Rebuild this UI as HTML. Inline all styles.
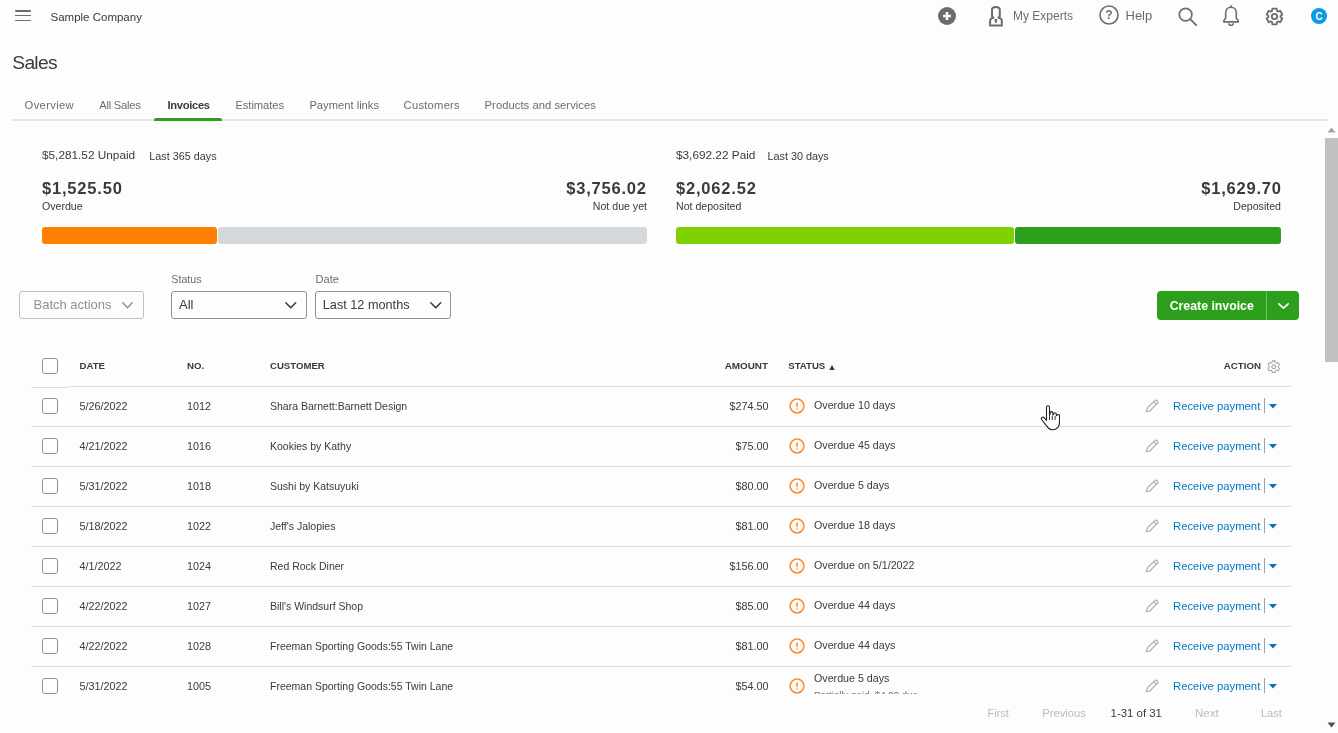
<!DOCTYPE html>
<html><head><meta charset="utf-8"><title>Sales - Invoices</title>
<style>
html,body{margin:0;padding:0;}
body{width:1338px;height:733px;overflow:hidden;position:relative;background:#fdfdfd;font-family:"Liberation Sans", sans-serif;}
.t{position:absolute;white-space:nowrap;}
</style></head><body><div id="root" style="position:absolute;left:0;top:0;width:1338px;height:733px;will-change:transform">
<div style="position:absolute;left:15px;top:10.1px;width:16px;height:1.9px;background:#6b6c72;border-radius:1px"></div>
<div style="position:absolute;left:15px;top:14.6px;width:16px;height:1.9px;background:#6b6c72;border-radius:1px"></div>
<div style="position:absolute;left:15px;top:19.6px;width:16px;height:1.9px;background:#6b6c72;border-radius:1px"></div>
<div class="t" style="left:50.5px;top:11.57px;font-size:11.5px;line-height:11.5px;color:#393a3d;font-weight:400;">Sample Company</div>
<svg style="position:absolute;left:938px;top:7px" width="18" height="18" viewBox="0 0 18 18"><circle cx="9" cy="9" r="9" fill="#6b6c72"/><path d="M9 5.1v7.8M5.1 9h7.8" stroke="#fff" stroke-width="2.5"/></svg>
<svg style="position:absolute;left:988px;top:5px" width="17" height="22" viewBox="0 0 17 22"><path d="M4 12.2V4.6C4 2.6 5.4 1.9 7.9 1.9C10.4 1.9 11.8 2.6 11.8 4.6V12.2" fill="none" stroke="#6b6c72" stroke-width="2"/><path d="M2.1 20.6V15.6C2.1 14.4 3 13.6 4.4 13L6.3 12.3M13.8 20.6V15.6C13.8 14.4 12.9 13.6 11.5 13L9.6 12.3M1.1 20.6H14.8" fill="none" stroke="#6b6c72" stroke-width="2"/><path d="M6.6 14.1h2.6l-.2 3.2-1.1 1-1.1-1z" fill="#6b6c72"/></svg>
<div class="t" style="left:1013px;top:9.54px;font-size:12px;line-height:12px;color:#6b6c72;font-weight:400;">My Experts</div>
<svg style="position:absolute;left:1099px;top:5px" width="20" height="20" viewBox="0 0 20 20"><circle cx="10" cy="10" r="9" fill="none" stroke="#6b6c72" stroke-width="1.6"/><text x="10" y="14.3" text-anchor="middle" font-family="Liberation Sans" font-weight="700" font-size="12" fill="#6b6c72">?</text></svg>
<div class="t" style="left:1125.5px;top:8.70px;font-size:13px;line-height:13px;color:#6b6c72;font-weight:400;">Help</div>
<svg style="position:absolute;left:1178px;top:7px" width="20" height="19" viewBox="0 0 20 19"><circle cx="7.6" cy="7.6" r="6.3" fill="none" stroke="#6b6c72" stroke-width="1.7"/><path d="M12.2 12.2l6 6" stroke="#6b6c72" stroke-width="1.8" stroke-linecap="round"/></svg>
<svg style="position:absolute;left:1222px;top:5px" width="18" height="21" viewBox="0 0 18 21"><path d="M9 2.2c-3.2 0-5.3 2.4-5.3 5.6v5.2L1.8 15.6v1.3h14.4v-1.3l-1.9-2.6V7.8C14.3 4.6 12.2 2.2 9 2.2z" fill="none" stroke="#6b6c72" stroke-width="1.6" stroke-linejoin="round"/><path d="M9 .8v1.6" stroke="#6b6c72" stroke-width="1.6" stroke-linecap="round"/><path d="M6.8 18.3a2.2 2.2 0 0 0 4.4 0" fill="none" stroke="#6b6c72" stroke-width="1.6"/></svg>
<svg style="position:absolute;left:1265px;top:7.1px" width="19" height="19" viewBox="0 0 19 19"><path d="M7.01 3.93 L7.34 1.69 L11.66 1.69 L11.99 3.93 L13.08 4.56 L15.18 3.73 L17.34 7.47 L15.57 8.87 L15.57 10.13 L17.34 11.53 L15.18 15.27 L13.08 14.44 L11.99 15.07 L11.66 17.31 L7.34 17.31 L7.01 15.07 L5.92 14.44 L3.82 15.27 L1.66 11.53 L3.43 10.13 L3.43 8.87 L1.66 7.47 L3.82 3.73 L5.92 4.56Z" fill="none" stroke="#6b6c72" stroke-width="1.8" stroke-linejoin="round"/><circle cx="9.5" cy="9.5" r="2.7" fill="none" stroke="#6b6c72" stroke-width="1.8"/></svg>
<svg style="position:absolute;left:1311px;top:8px" width="16" height="16" viewBox="0 0 16 16"><circle cx="8" cy="8" r="8" fill="#0d9ae6"/><text x="8" y="11.6" text-anchor="middle" font-family="Liberation Sans" font-weight="700" font-size="10" fill="#fff">C</text></svg>
<div class="t" style="left:12.3px;top:52.95px;font-size:19.2px;line-height:19.2px;color:#393a3d;font-weight:400;letter-spacing:-0.7px;">Sales</div>
<div class="t" style="left:24.6px;top:99.72px;font-size:11.2px;line-height:11.2px;color:#6b6c72;font-weight:400;letter-spacing:0.34px;">Overview</div>
<div class="t" style="left:99.3px;top:99.72px;font-size:11.2px;line-height:11.2px;color:#6b6c72;font-weight:400;letter-spacing:-0.25px;">All Sales</div>
<div class="t" style="left:167.4px;top:99.72px;font-size:11.2px;line-height:11.2px;color:#393a3d;font-weight:700;letter-spacing:-0.3px;">Invoices</div>
<div class="t" style="left:235.4px;top:99.72px;font-size:11.2px;line-height:11.2px;color:#6b6c72;font-weight:400;letter-spacing:-0.05px;">Estimates</div>
<div class="t" style="left:309.4px;top:99.72px;font-size:11.2px;line-height:11.2px;color:#6b6c72;font-weight:400;">Payment links</div>
<div class="t" style="left:403.6px;top:99.72px;font-size:11.2px;line-height:11.2px;color:#6b6c72;font-weight:400;letter-spacing:0.25px;">Customers</div>
<div class="t" style="left:484.6px;top:99.72px;font-size:11.2px;line-height:11.2px;color:#6b6c72;font-weight:400;letter-spacing:0.06px;">Products and services</div>
<div style="position:absolute;left:12px;top:119px;width:1315px;height:2px;background:#e3e5e8"></div>
<div style="position:absolute;left:154px;top:118px;width:68px;height:3px;background:#2ca01c;border-radius:2px 2px 0 0"></div>
<div style="position:absolute;left:1325px;top:121px;width:13px;height:612px;background:#fdfdfd"></div>
<div style="position:absolute;left:1325px;top:138px;width:13px;height:224px;background:#c1c1c1"></div>
<svg style="position:absolute;left:1327px;top:127px" width="9" height="6" viewBox="0 0 9 6"><path d="M4.5 0.5L8.5 5.5H0.5z" fill="#a3a3a3"/></svg>
<svg style="position:absolute;left:1327px;top:722px" width="9" height="6" viewBox="0 0 9 6"><path d="M0.5 0.5H8.5L4.5 5.5z" fill="#505050"/></svg>
<div class="t" style="left:42px;top:150.01px;font-size:11.8px;line-height:11.8px;color:#393a3d;font-weight:400;">$5,281.52 Unpaid</div>
<div class="t" style="left:149.3px;top:150.86px;font-size:10.8px;line-height:10.8px;color:#393a3d;font-weight:400;">Last 365 days</div>
<div class="t" style="left:42px;top:179.73px;font-size:16.5px;line-height:16.5px;color:#393a3d;font-weight:700;letter-spacing:0.8px;">$1,525.50</div>
<div class="t" style="left:42px;top:201.03px;font-size:10.6px;line-height:10.6px;color:#393a3d;font-weight:400;">Overdue</div>
<div class="t" style="right:692px;top:179.73px;font-size:16.5px;line-height:16.5px;color:#393a3d;font-weight:700;letter-spacing:0.8px;margin-right:-0.8px">$3,756.02</div>
<div class="t" style="right:691px;top:201.03px;font-size:10.6px;line-height:10.6px;color:#393a3d;font-weight:400;">Not due yet</div>
<div style="position:absolute;left:42px;top:227px;width:175px;height:17px;background:#ff8000;border-radius:3px"></div>
<div style="position:absolute;left:218px;top:227px;width:429px;height:17px;background:#d4d7dc;border-radius:3px"></div>
<div class="t" style="left:676px;top:150.01px;font-size:11.8px;line-height:11.8px;color:#393a3d;font-weight:400;">$3,692.22 Paid</div>
<div class="t" style="left:767.5px;top:150.86px;font-size:10.8px;line-height:10.8px;color:#393a3d;font-weight:400;">Last 30 days</div>
<div class="t" style="left:676px;top:179.73px;font-size:16.5px;line-height:16.5px;color:#393a3d;font-weight:700;letter-spacing:0.8px;">$2,062.52</div>
<div class="t" style="left:676px;top:201.03px;font-size:10.6px;line-height:10.6px;color:#393a3d;font-weight:400;">Not deposited</div>
<div class="t" style="right:57px;top:179.73px;font-size:16.5px;line-height:16.5px;color:#393a3d;font-weight:700;letter-spacing:0.8px;margin-right:-0.8px">$1,629.70</div>
<div class="t" style="right:57px;top:201.03px;font-size:10.6px;line-height:10.6px;color:#393a3d;font-weight:400;">Deposited</div>
<div style="position:absolute;left:676px;top:227px;width:338px;height:17px;background:#7fd000;border-radius:3px"></div>
<div style="position:absolute;left:1015px;top:227px;width:266px;height:17px;background:#2ca01c;border-radius:3px"></div>
<div style="position:absolute;left:19px;top:291px;width:125px;height:28px;box-sizing:border-box;border:1px solid #babec5;border-radius:3px"></div>
<div class="t" style="left:33.5px;top:297.70px;font-size:13px;line-height:13px;color:#8d9096;font-weight:400;">Batch actions</div>
<svg style="position:absolute;left:122px;top:301.5px;overflow:visible" width="11" height="6.5" viewBox="0 0 11 6.5"><path d="M0.8 0.8L5.5 5.7L10.2 0.8" fill="none" stroke="#8d9096" stroke-width="1.5" stroke-linecap="round" stroke-linejoin="round"/></svg>
<div class="t" style="left:171.3px;top:273.94px;font-size:10.7px;line-height:10.7px;color:#6b6c72;font-weight:400;">Status</div>
<div style="position:absolute;left:171px;top:291px;width:136px;height:28px;box-sizing:border-box;border:1px solid #8d9096;border-radius:3px"></div>
<div class="t" style="left:179px;top:297.70px;font-size:13px;line-height:13px;color:#393a3d;font-weight:400;">All</div>
<svg style="position:absolute;left:285px;top:301.5px;overflow:visible" width="11.5" height="6.5" viewBox="0 0 11.5 6.5"><path d="M0.8 0.8L5.75 5.7L10.7 0.8" fill="none" stroke="#393a3d" stroke-width="1.5" stroke-linecap="round" stroke-linejoin="round"/></svg>
<div class="t" style="left:315.6px;top:273.69px;font-size:11px;line-height:11px;color:#6b6c72;font-weight:400;">Date</div>
<div style="position:absolute;left:315px;top:291px;width:136px;height:28px;box-sizing:border-box;border:1px solid #8d9096;border-radius:3px"></div>
<div class="t" style="left:322.8px;top:298.75px;font-size:12.7px;line-height:12.7px;color:#393a3d;font-weight:400;">Last 12 months</div>
<svg style="position:absolute;left:429.5px;top:301.5px;overflow:visible" width="11.5" height="6.5" viewBox="0 0 11.5 6.5"><path d="M0.8 0.8L5.75 5.7L10.7 0.8" fill="none" stroke="#393a3d" stroke-width="1.5" stroke-linecap="round" stroke-linejoin="round"/></svg>
<div style="position:absolute;left:1157px;top:291px;width:142px;height:29px;background:#2ca01c;border-radius:4px"></div>
<div style="position:absolute;left:1266px;top:291px;width:1px;height:29px;background:#6cc060"></div>
<div class="t" style="left:1169.7px;top:299.89px;font-size:12.3px;line-height:12.3px;color:#fff;font-weight:700;">Create invoice</div>
<svg style="position:absolute;left:1277.5px;top:303px;overflow:visible" width="11" height="6" viewBox="0 0 11 6"><path d="M0.8 0.8L5.5 5.2L10.2 0.8" fill="none" stroke="#fff" stroke-width="1.6" stroke-linecap="round" stroke-linejoin="round"/></svg>
<div style="position:absolute;left:42px;top:358px;width:16px;height:16px;box-sizing:border-box;border:1px solid #8d9096;border-radius:3px;background:#fff"></div>
<div class="t" style="left:79.5px;top:361.47px;font-size:9.6px;line-height:9.6px;color:#393a3d;font-weight:700;">DATE</div>
<div class="t" style="left:187px;top:361.47px;font-size:9.6px;line-height:9.6px;color:#393a3d;font-weight:700;">NO.</div>
<div class="t" style="left:270px;top:361.47px;font-size:9.6px;line-height:9.6px;color:#393a3d;font-weight:700;">CUSTOMER</div>
<div class="t" style="right:570px;top:361.22px;font-size:9.9px;line-height:9.9px;color:#393a3d;font-weight:700;">AMOUNT</div>
<div class="t" style="left:788.3px;top:361.47px;font-size:9.6px;line-height:9.6px;color:#393a3d;font-weight:700;">STATUS</div>
<svg style="position:absolute;left:828.5px;top:364.5px" width="6" height="5.5" viewBox="0 0 6 5.5"><path d="M3 0L6 5.5H0z" fill="#393a3d"/></svg>
<div class="t" style="right:77px;top:361.39px;font-size:9.7px;line-height:9.7px;color:#393a3d;font-weight:700;">ACTION</div>
<svg style="position:absolute;left:1267px;top:359.5px" width="13.5" height="13.5" viewBox="0 0 19 19"><path d="M7.13 3.56 L7.62 1.11 L11.38 1.11 L11.87 3.56 L13.46 4.47 L15.83 3.68 L17.71 6.93 L15.83 8.58 L15.83 10.42 L17.71 12.07 L15.83 15.32 L13.46 14.53 L11.87 15.44 L11.38 17.89 L7.62 17.89 L7.13 15.44 L5.54 14.53 L3.17 15.32 L1.29 12.07 L3.17 10.42 L3.17 8.58 L1.29 6.93 L3.17 3.68 L5.54 4.47Z" fill="none" stroke="#8d9096" stroke-width="1.4" stroke-linejoin="round"/><circle cx="9.5" cy="9.5" r="2.7" fill="none" stroke="#8d9096" stroke-width="1.4"/></svg>
<div style="position:absolute;left:31px;top:387px;width:38px;height:1px;background:#dcdee2"></div>
<div style="position:absolute;left:69px;top:386px;width:1222px;height:1px;background:#dcdee2"></div>
<div style="position:absolute;left:0;top:387px;width:1338px;height:307px;overflow:hidden">
<div style="position:absolute;left:42px;top:11px;width:16px;height:16px;box-sizing:border-box;border:1px solid #8d9096;border-radius:3px;background:#fff"></div>
<div class="t" style="left:79.5px;top:13.86px;font-size:10.8px;line-height:10.8px;color:#393a3d;font-weight:400;">5/26/2022</div>
<div class="t" style="left:187px;top:13.86px;font-size:10.8px;line-height:10.8px;color:#393a3d;font-weight:400;">1012</div>
<div class="t" style="left:270px;top:14.11px;font-size:10.5px;line-height:10.5px;color:#393a3d;font-weight:400;">Shara Barnett:Barnett Design</div>
<div class="t" style="right:569.5px;top:13.86px;font-size:10.8px;line-height:10.8px;color:#393a3d;font-weight:400;">$274.50</div>
<svg style="position:absolute;left:789.3px;top:11.3px" width="16" height="16" viewBox="0 0 16 16"><circle cx="8" cy="8" r="6.9" fill="none" stroke="#ff8a2b" stroke-width="1.5"/><path d="M8 4.5v4.6" stroke="#ff8a2b" stroke-width="1.6"/><path d="M6.9 10.6h2.2L8 12z" fill="#ff8a2b"/></svg>
<div class="t" style="left:814px;top:13.44px;font-size:10.7px;line-height:10.7px;color:#393a3d;font-weight:400;">Overdue 10 days</div>
<svg style="position:absolute;left:1145px;top:12.0px" width="14" height="14" viewBox="0 0 14 14"><path d="M1.3 12.7l.9-3.6 7.6-7.6a1.4 1.4 0 0 1 2 0l.7.7a1.4 1.4 0 0 1 0 2l-7.6 7.6z M8.6 2.7l2.7 2.7" fill="none" stroke="#b0b3b8" stroke-width="1.3" stroke-linejoin="round"/></svg>
<div class="t" style="left:1173px;top:13.93px;font-size:11.3px;line-height:11.3px;color:#0077c5;font-weight:400;">Receive payment</div>
<div style="position:absolute;left:1264px;top:11px;width:1px;height:15px;background:#a0a3a8"></div>
<svg style="position:absolute;left:1269px;top:17.0px" width="8" height="5" viewBox="0 0 8 5"><path d="M0 0H8L4 4.6z" fill="#0077c5"/></svg>
<div style="position:absolute;left:31px;top:39px;width:1260px;height:1px;background:#dcdee2"></div>
<div style="position:absolute;left:42px;top:51px;width:16px;height:16px;box-sizing:border-box;border:1px solid #8d9096;border-radius:3px;background:#fff"></div>
<div class="t" style="left:79.5px;top:53.86px;font-size:10.8px;line-height:10.8px;color:#393a3d;font-weight:400;">4/21/2022</div>
<div class="t" style="left:187px;top:53.86px;font-size:10.8px;line-height:10.8px;color:#393a3d;font-weight:400;">1016</div>
<div class="t" style="left:270px;top:54.11px;font-size:10.5px;line-height:10.5px;color:#393a3d;font-weight:400;">Kookies by Kathy</div>
<div class="t" style="right:569.5px;top:53.86px;font-size:10.8px;line-height:10.8px;color:#393a3d;font-weight:400;">$75.00</div>
<svg style="position:absolute;left:789.3px;top:51.3px" width="16" height="16" viewBox="0 0 16 16"><circle cx="8" cy="8" r="6.9" fill="none" stroke="#ff8a2b" stroke-width="1.5"/><path d="M8 4.5v4.6" stroke="#ff8a2b" stroke-width="1.6"/><path d="M6.9 10.6h2.2L8 12z" fill="#ff8a2b"/></svg>
<div class="t" style="left:814px;top:53.44px;font-size:10.7px;line-height:10.7px;color:#393a3d;font-weight:400;">Overdue 45 days</div>
<svg style="position:absolute;left:1145px;top:52.0px" width="14" height="14" viewBox="0 0 14 14"><path d="M1.3 12.7l.9-3.6 7.6-7.6a1.4 1.4 0 0 1 2 0l.7.7a1.4 1.4 0 0 1 0 2l-7.6 7.6z M8.6 2.7l2.7 2.7" fill="none" stroke="#b0b3b8" stroke-width="1.3" stroke-linejoin="round"/></svg>
<div class="t" style="left:1173px;top:53.93px;font-size:11.3px;line-height:11.3px;color:#0077c5;font-weight:400;">Receive payment</div>
<div style="position:absolute;left:1264px;top:51px;width:1px;height:15px;background:#a0a3a8"></div>
<svg style="position:absolute;left:1269px;top:57.0px" width="8" height="5" viewBox="0 0 8 5"><path d="M0 0H8L4 4.6z" fill="#0077c5"/></svg>
<div style="position:absolute;left:31px;top:79px;width:1260px;height:1px;background:#dcdee2"></div>
<div style="position:absolute;left:42px;top:91px;width:16px;height:16px;box-sizing:border-box;border:1px solid #8d9096;border-radius:3px;background:#fff"></div>
<div class="t" style="left:79.5px;top:93.86px;font-size:10.8px;line-height:10.8px;color:#393a3d;font-weight:400;">5/31/2022</div>
<div class="t" style="left:187px;top:93.86px;font-size:10.8px;line-height:10.8px;color:#393a3d;font-weight:400;">1018</div>
<div class="t" style="left:270px;top:94.11px;font-size:10.5px;line-height:10.5px;color:#393a3d;font-weight:400;">Sushi by Katsuyuki</div>
<div class="t" style="right:569.5px;top:93.86px;font-size:10.8px;line-height:10.8px;color:#393a3d;font-weight:400;">$80.00</div>
<svg style="position:absolute;left:789.3px;top:91.3px" width="16" height="16" viewBox="0 0 16 16"><circle cx="8" cy="8" r="6.9" fill="none" stroke="#ff8a2b" stroke-width="1.5"/><path d="M8 4.5v4.6" stroke="#ff8a2b" stroke-width="1.6"/><path d="M6.9 10.6h2.2L8 12z" fill="#ff8a2b"/></svg>
<div class="t" style="left:814px;top:93.44px;font-size:10.7px;line-height:10.7px;color:#393a3d;font-weight:400;">Overdue 5 days</div>
<svg style="position:absolute;left:1145px;top:92.0px" width="14" height="14" viewBox="0 0 14 14"><path d="M1.3 12.7l.9-3.6 7.6-7.6a1.4 1.4 0 0 1 2 0l.7.7a1.4 1.4 0 0 1 0 2l-7.6 7.6z M8.6 2.7l2.7 2.7" fill="none" stroke="#b0b3b8" stroke-width="1.3" stroke-linejoin="round"/></svg>
<div class="t" style="left:1173px;top:93.93px;font-size:11.3px;line-height:11.3px;color:#0077c5;font-weight:400;">Receive payment</div>
<div style="position:absolute;left:1264px;top:91px;width:1px;height:15px;background:#a0a3a8"></div>
<svg style="position:absolute;left:1269px;top:97.0px" width="8" height="5" viewBox="0 0 8 5"><path d="M0 0H8L4 4.6z" fill="#0077c5"/></svg>
<div style="position:absolute;left:31px;top:119px;width:1260px;height:1px;background:#dcdee2"></div>
<div style="position:absolute;left:42px;top:131px;width:16px;height:16px;box-sizing:border-box;border:1px solid #8d9096;border-radius:3px;background:#fff"></div>
<div class="t" style="left:79.5px;top:133.86px;font-size:10.8px;line-height:10.8px;color:#393a3d;font-weight:400;">5/18/2022</div>
<div class="t" style="left:187px;top:133.86px;font-size:10.8px;line-height:10.8px;color:#393a3d;font-weight:400;">1022</div>
<div class="t" style="left:270px;top:134.11px;font-size:10.5px;line-height:10.5px;color:#393a3d;font-weight:400;">Jeff's Jalopies</div>
<div class="t" style="right:569.5px;top:133.86px;font-size:10.8px;line-height:10.8px;color:#393a3d;font-weight:400;">$81.00</div>
<svg style="position:absolute;left:789.3px;top:131.3px" width="16" height="16" viewBox="0 0 16 16"><circle cx="8" cy="8" r="6.9" fill="none" stroke="#ff8a2b" stroke-width="1.5"/><path d="M8 4.5v4.6" stroke="#ff8a2b" stroke-width="1.6"/><path d="M6.9 10.6h2.2L8 12z" fill="#ff8a2b"/></svg>
<div class="t" style="left:814px;top:133.44px;font-size:10.7px;line-height:10.7px;color:#393a3d;font-weight:400;">Overdue 18 days</div>
<svg style="position:absolute;left:1145px;top:132.0px" width="14" height="14" viewBox="0 0 14 14"><path d="M1.3 12.7l.9-3.6 7.6-7.6a1.4 1.4 0 0 1 2 0l.7.7a1.4 1.4 0 0 1 0 2l-7.6 7.6z M8.6 2.7l2.7 2.7" fill="none" stroke="#b0b3b8" stroke-width="1.3" stroke-linejoin="round"/></svg>
<div class="t" style="left:1173px;top:133.93px;font-size:11.3px;line-height:11.3px;color:#0077c5;font-weight:400;">Receive payment</div>
<div style="position:absolute;left:1264px;top:131px;width:1px;height:15px;background:#a0a3a8"></div>
<svg style="position:absolute;left:1269px;top:137.0px" width="8" height="5" viewBox="0 0 8 5"><path d="M0 0H8L4 4.6z" fill="#0077c5"/></svg>
<div style="position:absolute;left:31px;top:159px;width:1260px;height:1px;background:#dcdee2"></div>
<div style="position:absolute;left:42px;top:171px;width:16px;height:16px;box-sizing:border-box;border:1px solid #8d9096;border-radius:3px;background:#fff"></div>
<div class="t" style="left:79.5px;top:173.86px;font-size:10.8px;line-height:10.8px;color:#393a3d;font-weight:400;">4/1/2022</div>
<div class="t" style="left:187px;top:173.86px;font-size:10.8px;line-height:10.8px;color:#393a3d;font-weight:400;">1024</div>
<div class="t" style="left:270px;top:174.11px;font-size:10.5px;line-height:10.5px;color:#393a3d;font-weight:400;">Red Rock Diner</div>
<div class="t" style="right:569.5px;top:173.86px;font-size:10.8px;line-height:10.8px;color:#393a3d;font-weight:400;">$156.00</div>
<svg style="position:absolute;left:789.3px;top:171.3px" width="16" height="16" viewBox="0 0 16 16"><circle cx="8" cy="8" r="6.9" fill="none" stroke="#ff8a2b" stroke-width="1.5"/><path d="M8 4.5v4.6" stroke="#ff8a2b" stroke-width="1.6"/><path d="M6.9 10.6h2.2L8 12z" fill="#ff8a2b"/></svg>
<div class="t" style="left:814px;top:173.44px;font-size:10.7px;line-height:10.7px;color:#393a3d;font-weight:400;">Overdue on 5/1/2022</div>
<svg style="position:absolute;left:1145px;top:172.0px" width="14" height="14" viewBox="0 0 14 14"><path d="M1.3 12.7l.9-3.6 7.6-7.6a1.4 1.4 0 0 1 2 0l.7.7a1.4 1.4 0 0 1 0 2l-7.6 7.6z M8.6 2.7l2.7 2.7" fill="none" stroke="#b0b3b8" stroke-width="1.3" stroke-linejoin="round"/></svg>
<div class="t" style="left:1173px;top:173.93px;font-size:11.3px;line-height:11.3px;color:#0077c5;font-weight:400;">Receive payment</div>
<div style="position:absolute;left:1264px;top:171px;width:1px;height:15px;background:#a0a3a8"></div>
<svg style="position:absolute;left:1269px;top:177.0px" width="8" height="5" viewBox="0 0 8 5"><path d="M0 0H8L4 4.6z" fill="#0077c5"/></svg>
<div style="position:absolute;left:31px;top:199px;width:1260px;height:1px;background:#dcdee2"></div>
<div style="position:absolute;left:42px;top:211px;width:16px;height:16px;box-sizing:border-box;border:1px solid #8d9096;border-radius:3px;background:#fff"></div>
<div class="t" style="left:79.5px;top:213.86px;font-size:10.8px;line-height:10.8px;color:#393a3d;font-weight:400;">4/22/2022</div>
<div class="t" style="left:187px;top:213.86px;font-size:10.8px;line-height:10.8px;color:#393a3d;font-weight:400;">1027</div>
<div class="t" style="left:270px;top:214.11px;font-size:10.5px;line-height:10.5px;color:#393a3d;font-weight:400;">Bill's Windsurf Shop</div>
<div class="t" style="right:569.5px;top:213.86px;font-size:10.8px;line-height:10.8px;color:#393a3d;font-weight:400;">$85.00</div>
<svg style="position:absolute;left:789.3px;top:211.3px" width="16" height="16" viewBox="0 0 16 16"><circle cx="8" cy="8" r="6.9" fill="none" stroke="#ff8a2b" stroke-width="1.5"/><path d="M8 4.5v4.6" stroke="#ff8a2b" stroke-width="1.6"/><path d="M6.9 10.6h2.2L8 12z" fill="#ff8a2b"/></svg>
<div class="t" style="left:814px;top:213.44px;font-size:10.7px;line-height:10.7px;color:#393a3d;font-weight:400;">Overdue 44 days</div>
<svg style="position:absolute;left:1145px;top:212.0px" width="14" height="14" viewBox="0 0 14 14"><path d="M1.3 12.7l.9-3.6 7.6-7.6a1.4 1.4 0 0 1 2 0l.7.7a1.4 1.4 0 0 1 0 2l-7.6 7.6z M8.6 2.7l2.7 2.7" fill="none" stroke="#b0b3b8" stroke-width="1.3" stroke-linejoin="round"/></svg>
<div class="t" style="left:1173px;top:213.93px;font-size:11.3px;line-height:11.3px;color:#0077c5;font-weight:400;">Receive payment</div>
<div style="position:absolute;left:1264px;top:211px;width:1px;height:15px;background:#a0a3a8"></div>
<svg style="position:absolute;left:1269px;top:217.0px" width="8" height="5" viewBox="0 0 8 5"><path d="M0 0H8L4 4.6z" fill="#0077c5"/></svg>
<div style="position:absolute;left:31px;top:239px;width:1260px;height:1px;background:#dcdee2"></div>
<div style="position:absolute;left:42px;top:251px;width:16px;height:16px;box-sizing:border-box;border:1px solid #8d9096;border-radius:3px;background:#fff"></div>
<div class="t" style="left:79.5px;top:253.86px;font-size:10.8px;line-height:10.8px;color:#393a3d;font-weight:400;">4/22/2022</div>
<div class="t" style="left:187px;top:253.86px;font-size:10.8px;line-height:10.8px;color:#393a3d;font-weight:400;">1028</div>
<div class="t" style="left:270px;top:254.11px;font-size:10.5px;line-height:10.5px;color:#393a3d;font-weight:400;">Freeman Sporting Goods:55 Twin Lane</div>
<div class="t" style="right:569.5px;top:253.86px;font-size:10.8px;line-height:10.8px;color:#393a3d;font-weight:400;">$81.00</div>
<svg style="position:absolute;left:789.3px;top:251.3px" width="16" height="16" viewBox="0 0 16 16"><circle cx="8" cy="8" r="6.9" fill="none" stroke="#ff8a2b" stroke-width="1.5"/><path d="M8 4.5v4.6" stroke="#ff8a2b" stroke-width="1.6"/><path d="M6.9 10.6h2.2L8 12z" fill="#ff8a2b"/></svg>
<div class="t" style="left:814px;top:253.44px;font-size:10.7px;line-height:10.7px;color:#393a3d;font-weight:400;">Overdue 44 days</div>
<svg style="position:absolute;left:1145px;top:252.0px" width="14" height="14" viewBox="0 0 14 14"><path d="M1.3 12.7l.9-3.6 7.6-7.6a1.4 1.4 0 0 1 2 0l.7.7a1.4 1.4 0 0 1 0 2l-7.6 7.6z M8.6 2.7l2.7 2.7" fill="none" stroke="#b0b3b8" stroke-width="1.3" stroke-linejoin="round"/></svg>
<div class="t" style="left:1173px;top:253.93px;font-size:11.3px;line-height:11.3px;color:#0077c5;font-weight:400;">Receive payment</div>
<div style="position:absolute;left:1264px;top:251px;width:1px;height:15px;background:#a0a3a8"></div>
<svg style="position:absolute;left:1269px;top:257.0px" width="8" height="5" viewBox="0 0 8 5"><path d="M0 0H8L4 4.6z" fill="#0077c5"/></svg>
<div style="position:absolute;left:31px;top:279px;width:1260px;height:1px;background:#dcdee2"></div>
<div style="position:absolute;left:42px;top:291px;width:16px;height:16px;box-sizing:border-box;border:1px solid #8d9096;border-radius:3px;background:#fff"></div>
<div class="t" style="left:79.5px;top:293.86px;font-size:10.8px;line-height:10.8px;color:#393a3d;font-weight:400;">5/31/2022</div>
<div class="t" style="left:187px;top:293.86px;font-size:10.8px;line-height:10.8px;color:#393a3d;font-weight:400;">1005</div>
<div class="t" style="left:270px;top:294.11px;font-size:10.5px;line-height:10.5px;color:#393a3d;font-weight:400;">Freeman Sporting Goods:55 Twin Lane</div>
<div class="t" style="right:569.5px;top:293.86px;font-size:10.8px;line-height:10.8px;color:#393a3d;font-weight:400;">$54.00</div>
<svg style="position:absolute;left:789.3px;top:291.3px" width="16" height="16" viewBox="0 0 16 16"><circle cx="8" cy="8" r="6.9" fill="none" stroke="#ff8a2b" stroke-width="1.5"/><path d="M8 4.5v4.6" stroke="#ff8a2b" stroke-width="1.6"/><path d="M6.9 10.6h2.2L8 12z" fill="#ff8a2b"/></svg>
<div class="t" style="left:814px;top:285.94px;font-size:10.7px;line-height:10.7px;color:#393a3d;font-weight:400;">Overdue 5 days</div>
<div class="t" style="left:814px;top:303.09px;font-size:9.7px;line-height:9.7px;color:#6b6c72;font-weight:400;">Partially paid, $4.00 due</div>
<svg style="position:absolute;left:1145px;top:292.0px" width="14" height="14" viewBox="0 0 14 14"><path d="M1.3 12.7l.9-3.6 7.6-7.6a1.4 1.4 0 0 1 2 0l.7.7a1.4 1.4 0 0 1 0 2l-7.6 7.6z M8.6 2.7l2.7 2.7" fill="none" stroke="#b0b3b8" stroke-width="1.3" stroke-linejoin="round"/></svg>
<div class="t" style="left:1173px;top:293.93px;font-size:11.3px;line-height:11.3px;color:#0077c5;font-weight:400;">Receive payment</div>
<div style="position:absolute;left:1264px;top:291px;width:1px;height:15px;background:#a0a3a8"></div>
<svg style="position:absolute;left:1269px;top:297.0px" width="8" height="5" viewBox="0 0 8 5"><path d="M0 0H8L4 4.6z" fill="#0077c5"/></svg>
</div>
<div class="t" style="left:987.5px;top:707.69px;font-size:11px;line-height:11px;color:#b8bbc0;font-weight:400;">First</div>
<div class="t" style="left:1042.3px;top:707.52px;font-size:11.2px;line-height:11.2px;color:#b8bbc0;font-weight:400;">Previous</div>
<div class="t" style="left:1110.6px;top:708.35px;font-size:11.4px;line-height:11.4px;color:#393a3d;font-weight:400;">1-31 of 31</div>
<div class="t" style="left:1195px;top:707.18px;font-size:11.6px;line-height:11.6px;color:#b8bbc0;font-weight:400;">Next</div>
<div class="t" style="left:1261px;top:707.69px;font-size:11px;line-height:11px;color:#b8bbc0;font-weight:400;">Last</div>
<svg style="position:absolute;left:1040px;top:404.8px" width="20" height="26" viewBox="0 0 20 26"><path d="M6.5 2.2c0-.9.7-1.5 1.5-1.5s1.5.6 1.5 1.5v7.3l.6-.1V8c0-.8.7-1.4 1.4-1.4.8 0 1.4.6 1.4 1.4v1.6l.6.1V9.2c0-.8.6-1.4 1.4-1.4s1.4.6 1.4 1.4v1.3l.5.1c.1-.7.6-1.1 1.3-1.1.8 0 1.4.6 1.4 1.4v6.3c0 4.4-2.7 7.6-6.7 7.6-2.8 0-4.5-1.4-6-3.7L1.6 14.5c-.5-.8-.3-1.7.4-2.1.7-.5 1.6-.3 2.2.4l2.3 2.6z" fill="#fff" stroke="#222" stroke-width="1.1" stroke-linejoin="round"/><path d="M9.5 10v5M12.3 10.5v4.5M15.1 11v4" stroke="#222" stroke-width="0.9"/></svg>
</div></body></html>
